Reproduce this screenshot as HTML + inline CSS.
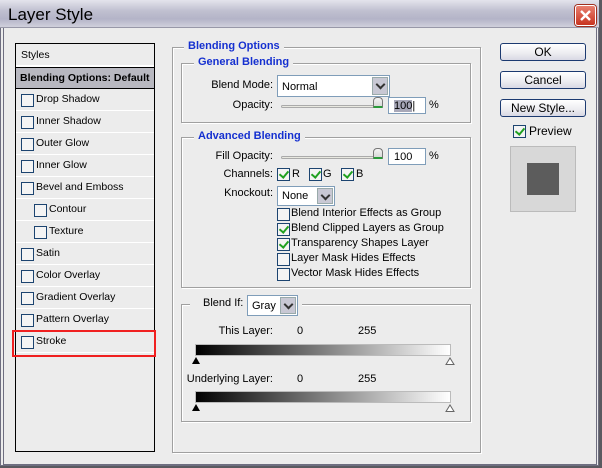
<!DOCTYPE html>
<html><head><meta charset="utf-8"><style>
*{box-sizing:border-box;margin:0;padding:0}
body{width:602px;height:468px;background:#5a5a60;font-family:"Liberation Sans",sans-serif;font-size:11px;color:#000;position:relative;overflow:hidden}
.a{position:absolute;white-space:nowrap}
#win{left:0;top:0;width:599px;height:466px;background:#ececec;border:1px solid #6e6e80}
#title{left:0;top:0;width:599px;height:28px;background:linear-gradient(#e4e4ec,#c0c0d0 40%,#b4b4c8 70%,#d0d0dc);border-bottom:1px solid #9898a8}
#title span{position:absolute;left:8px;top:5px;font-size:17px;font-family:"Liberation Sans",sans-serif}
#close{left:575px;top:5px;width:21px;height:21px;border-radius:3px;background:linear-gradient(#e88070,#c83420);border:1px solid #fff;box-shadow:0 0 0 1px #a03020}
.inner{left:3px;top:28px;width:594px;height:437px;border:1px solid #6e6e80;border-top:none}
#list{left:15px;top:43px;width:140px;height:409px;border:1px solid #000;background:#ececec}
.row{position:absolute;left:0;width:138px;height:22px;border-bottom:1px solid #fff}
.row span{position:absolute;top:4px;font-size:10.5px;color:#000;white-space:nowrap}
.cb{position:absolute;width:13px;height:13px;border:1px solid #1c4470;background:#f4f4f4}
.chk::after{content:"";position:absolute;left:3px;top:0px;width:4px;height:7px;border:solid #21a121;border-width:0 2px 2px 0;transform:rotate(40deg)}
.fs{position:absolute;border:1px solid #a0a0a0;box-shadow:inset 1px 1px #fff,1px 1px #fff}
.leg{position:absolute;background:#ececec;padding:0 4px;color:#1530d0;font-weight:bold;font-size:11px;white-space:nowrap}
.lbl{position:absolute;font-size:11px;text-align:right;white-space:nowrap}
.sel{position:absolute;background:#fff;border:1px solid #7f9db9;font-size:11px}
.sel span{position:absolute;left:4px;top:4px}
.sel i{position:absolute;right:1px;top:1px;bottom:1px;width:16px;background:#c8c8d4;border:1px solid #9aa}
.sel i::after{content:"";position:absolute;left:4px;top:3px;width:5px;height:5px;border:solid #333;border-width:0 2px 2px 0;transform:rotate(45deg)}
.slider{position:absolute;height:3px;border:1px solid #aaa;background:#e8e8e0;border-radius:2px}
.thumb{position:absolute;width:10px;height:11px;background:linear-gradient(#f4f4f4,#d8d8d8);border:1px solid #777;border-bottom:2px solid #2a9a3a;border-radius:4px 4px 1px 1px}
.inp{position:absolute;background:#fff;border:1px solid #7f9db9;font-size:11px;padding:2px 0 0 5px}
.btn{position:absolute;left:500px;width:86px;height:18px;border:1px solid #1c3a70;border-radius:3px;background:linear-gradient(#fff,#ececf0 60%,#d8d8e4);text-align:center;font-size:12px;line-height:16px}
.grad{position:absolute;left:195px;width:256px;height:12px;background:linear-gradient(90deg,#000,#fff);border:1px solid #bbb}
.tri{position:absolute;width:0;height:0;border-left:4px solid transparent;border-right:4px solid transparent}
</style></head><body>
<div id="win" class="a"></div>
<div id="title" class="a"><span>Layer Style</span></div>
<div id="close" class="a"><svg width="19" height="19" viewBox="0 0 19 19"><path d="M5 5L14 14M14 5L5 14" stroke="#fff" stroke-width="2.4"/></svg></div>
<div class="a inner"></div>

<div id="list" class="a">
 <div class="row" style="top:0;height:23px;border-bottom:2px solid #fff"><span style="left:5px;top:5px">Styles</span></div>
 <div class="row" style="top:23px;height:22px;background:#b8b8c0;border-top:1px solid #000;border-bottom:1px solid #000"><span style="left:4px;top:4px;font-weight:bold;font-size:10.5px">Blending Options: Default</span></div>
 <div class="row" style="top:45px"><div class="cb" style="left:5px;top:5px"></div><span style="left:20px">Drop Shadow</span></div>
 <div class="row" style="top:67px"><div class="cb" style="left:5px;top:5px"></div><span style="left:20px">Inner Shadow</span></div>
 <div class="row" style="top:89px"><div class="cb" style="left:5px;top:5px"></div><span style="left:20px">Outer Glow</span></div>
 <div class="row" style="top:111px"><div class="cb" style="left:5px;top:5px"></div><span style="left:20px">Inner Glow</span></div>
 <div class="row" style="top:133px"><div class="cb" style="left:5px;top:5px"></div><span style="left:20px">Bevel and Emboss</span></div>
 <div class="row" style="top:155px"><div class="cb" style="left:18px;top:5px"></div><span style="left:33px">Contour</span></div>
 <div class="row" style="top:177px"><div class="cb" style="left:18px;top:5px"></div><span style="left:33px">Texture</span></div>
 <div class="row" style="top:199px"><div class="cb" style="left:5px;top:5px"></div><span style="left:20px">Satin</span></div>
 <div class="row" style="top:221px"><div class="cb" style="left:5px;top:5px"></div><span style="left:20px">Color Overlay</span></div>
 <div class="row" style="top:243px"><div class="cb" style="left:5px;top:5px"></div><span style="left:20px">Gradient Overlay</span></div>
 <div class="row" style="top:265px"><div class="cb" style="left:5px;top:5px"></div><span style="left:20px">Pattern Overlay</span></div>
 <div class="row" style="top:287px"><div class="cb" style="left:5px;top:5px"></div><span style="left:20px">Stroke</span></div>
</div>
<div class="a" style="left:12px;top:330px;width:144px;height:27px;border:2px solid #f02020"></div>

<div class="fs" style="left:172px;top:47px;width:309px;height:406px"></div>
<div class="leg" style="left:184px;top:40px">Blending Options</div>
<div class="fs" style="left:181px;top:63px;width:290px;height:60px"></div>
<div class="leg" style="left:194px;top:56px">General Blending</div>
<div class="lbl" style="left:200px;top:79px;width:73px">Blend Mode:</div>
<div class="sel" style="left:277px;top:75px;width:113px;height:22px"><span style="top:5px">Normal</span><i></i></div>
<div class="lbl" style="left:200px;top:99px;width:73px">Opacity:</div>
<div class="slider" style="left:281px;top:105px;width:100px"></div>
<div class="thumb" style="left:373px;top:97px"></div>
<div class="inp" style="left:388px;top:97px;width:38px;height:17px"><span style="background:#a8a8b8">100</span>|</div>
<div class="a" style="left:429px;top:99px">%</div>

<div class="fs" style="left:181px;top:137px;width:290px;height:151px"></div>
<div class="leg" style="left:194px;top:130px">Advanced Blending</div>
<div class="lbl" style="left:200px;top:150px;width:73px">Fill Opacity:</div>
<div class="slider" style="left:281px;top:156px;width:100px"></div>
<div class="thumb" style="left:373px;top:148px"></div>
<div class="inp" style="left:388px;top:148px;width:38px;height:17px">100</div>
<div class="a" style="left:429px;top:150px">%</div>
<div class="lbl" style="left:200px;top:168px;width:73px">Channels:</div>
<div class="cb chk" style="left:277px;top:168px"></div><div class="a" style="left:292px;top:168px">R</div>
<div class="cb chk" style="left:309px;top:168px"></div><div class="a" style="left:323px;top:168px">G</div>
<div class="cb chk" style="left:341px;top:168px"></div><div class="a" style="left:356px;top:168px">B</div>
<div class="lbl" style="left:200px;top:187px;width:73px">Knockout:</div>
<div class="sel" style="left:277px;top:186px;width:58px;height:20px"><span style="top:3px">None</span><i></i></div>
<div class="cb" style="left:277px;top:208px"></div><div class="a" style="left:291px;top:207px">Blend Interior Effects as Group</div>
<div class="cb chk" style="left:277px;top:223px"></div><div class="a" style="left:291px;top:222px">Blend Clipped Layers as Group</div>
<div class="cb chk" style="left:277px;top:238px"></div><div class="a" style="left:291px;top:237px">Transparency Shapes Layer</div>
<div class="cb" style="left:277px;top:253px"></div><div class="a" style="left:291px;top:252px">Layer Mask Hides Effects</div>
<div class="cb" style="left:277px;top:268px"></div><div class="a" style="left:291px;top:267px">Vector Mask Hides Effects</div>

<div class="fs" style="left:181px;top:304px;width:290px;height:118px"></div>
<div class="a" style="left:190px;top:296px;width:112px;height:20px;background:#ececec"></div>
<div class="a" style="left:203px;top:297px">Blend If:</div>
<div class="sel" style="left:247px;top:295px;width:51px;height:21px"><span>Gray</span><i></i></div>
<div class="lbl" style="left:200px;top:325px;width:73px">This Layer:</div>
<div class="a" style="left:297px;top:325px">0</div><div class="a" style="left:358px;top:325px">255</div>
<div class="grad" style="top:344px"></div>
<div class="tri" style="left:192px;top:357px;border-bottom:7px solid #000"></div>
<svg class="a" style="left:445px;top:357px" width="10" height="8"><path d="M1 7.5L5 1L9 7.5Z" fill="#fff" stroke="#666"/></svg>
<div class="lbl" style="left:180px;top:373px;width:93px">Underlying Layer:</div>
<div class="a" style="left:297px;top:373px">0</div><div class="a" style="left:358px;top:373px">255</div>
<div class="grad" style="top:391px"></div>
<div class="tri" style="left:192px;top:404px;border-bottom:7px solid #000"></div>
<svg class="a" style="left:445px;top:404px" width="10" height="8"><path d="M1 7.5L5 1L9 7.5Z" fill="#fff" stroke="#666"/></svg>

<div class="btn" style="top:43px">OK</div>
<div class="btn" style="top:71px">Cancel</div>
<div class="btn" style="top:99px">New Style...</div>
<div class="cb chk" style="left:513px;top:125px"></div>
<div class="a" style="left:529px;top:124px;font-size:12px">Preview</div>
<div class="a" style="left:510px;top:146px;width:66px;height:66px;background:#d8d8d8;border:1px solid #bbb"></div>
<div class="a" style="left:527px;top:163px;width:32px;height:32px;background:#5c5c5c"></div>
</body></html>
